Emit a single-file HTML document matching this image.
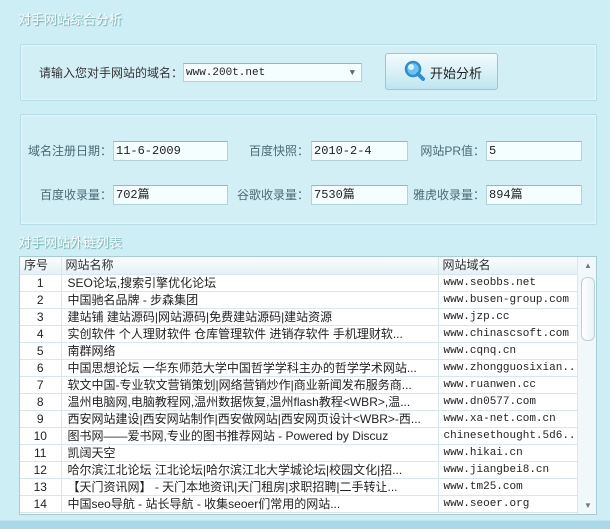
<!DOCTYPE html>
<html><head><meta charset="utf-8"><style>
*{margin:0;padding:0;box-sizing:border-box}
body{width:610px;height:529px;background:#cdeef5;font-family:"Liberation Sans","Noto Sans CJK SC",sans-serif;font-size:12px;color:#222;position:relative;overflow:hidden}
.a{position:absolute;white-space:nowrap}
.title{color:#fff;font-size:13px;text-shadow:1px 1px 1px #6aa;}
.panel{position:absolute;border:1px solid #b6dde6;background:#d3eff6;border-radius:2px;box-shadow:inset 0 0 2px #fff}
.inp{position:absolute;height:20px;background:#f4fdff;border:1px solid #b0d2da;border-top-color:#8fb8c3;font-family:"Liberation Mono","Noto Sans CJK SC",monospace;font-size:12px;line-height:18px;padding-left:2px}
.lbl{position:absolute;font-size:12px;color:#4a6a74;text-align:right;line-height:20px;white-space:nowrap}
table{border-collapse:collapse;font-size:12px}
td{height:17px;border-bottom:1px solid #d6e8ee;border-right:1px solid #d6e8ee;white-space:nowrap;overflow:hidden;line-height:16px}
.dm{font-family:"Liberation Mono",monospace;font-size:11px}
</style></head><body>
<div class="a title" style="left:18px;top:9px">对手网站综合分析</div>
<div class="panel" style="left:20px;top:44px;width:577px;height:57px"></div>
<div class="a" style="left:39px;top:64px;font-size:12px;color:#333">请输入您对手网站的域名：</div>
<div class="inp" style="left:183px;top:63px;width:179px;height:19px;font-size:11px">www.200t.net<span style="position:absolute;right:6px;top:0;color:#666;font-size:9px">▼</span></div>
<div class="a" style="left:385px;top:53px;width:113px;height:37px;border:1px solid #9cc6d2;border-radius:3px;background:linear-gradient(#f2fbfd,#d9f1f7 50%,#bfe5ef);"></div>
<svg class="a" style="left:403px;top:59px" width="24" height="24"><circle cx="10" cy="10" r="7" fill="#6cc3ee" stroke="#2d8fd3" stroke-width="2.5"/><circle cx="8" cy="8" r="3" fill="#d9f2ff"/><line x1="15" y1="15" x2="20" y2="20" stroke="#2d8fd3" stroke-width="4" stroke-linecap="round"/></svg>
<div class="a" style="left:430px;top:63px;font-size:13px">开始分析</div>

<div class="panel" style="left:20px;top:114px;width:577px;height:111px"></div>
<div class="lbl" style="left:10px;top:141px;width:102px">域名注册日期：</div>
<div class="inp" style="left:113px;top:141px;width:115px">11-6-2009</div>
<div class="lbl" style="left:220px;top:141px;width:89px">百度快照：</div>
<div class="inp" style="left:311px;top:141px;width:97px">2010-2-4</div>
<div class="lbl" style="left:410px;top:141px;width:75px">网站PR值：</div>
<div class="inp" style="left:486px;top:141px;width:96px">5</div>
<div class="lbl" style="left:10px;top:185px;width:102px">百度收录量：</div>
<div class="inp" style="left:113px;top:185px;width:115px">702篇</div>
<div class="lbl" style="left:230px;top:185px;width:79px">谷歌收录量：</div>
<div class="inp" style="left:311px;top:185px;width:97px">7530篇</div>
<div class="lbl" style="left:408px;top:185px;width:77px">雅虎收录量：</div>
<div class="inp" style="left:486px;top:185px;width:96px">894篇</div>

<div class="a title" style="left:18px;top:232px">对手网站外链列表</div>
<div class="a" style="left:19px;top:256px;width:578px;height:259px;background:#fff;border:1px solid #a9cbd5;overflow:hidden">
<table style="width:557px;table-layout:fixed">
<colgroup><col style="width:41px"><col style="width:377px"><col style="width:139px"></colgroup>
<tr style="background:linear-gradient(#fafdff,#e4f1f5)"><td style="padding-left:4px;color:#333">序号</td><td style="padding-left:4px;color:#333">网站名称</td><td style="padding-left:4px;color:#333">网站域名</td></tr>
<tr><td style="text-align:center">1</td><td style="padding-left:6px">SEO论坛,搜索引擎优化论坛</td><td class="dm" style="padding-left:5px">www.seobbs.net</td></tr>
<tr><td style="text-align:center">2</td><td style="padding-left:6px">中国驰名品牌 - 步森集团</td><td class="dm" style="padding-left:5px">www.busen-group.com</td></tr>
<tr><td style="text-align:center">3</td><td style="padding-left:6px">建站铺 建站源码|网站源码|免费建站源码|建站资源</td><td class="dm" style="padding-left:5px">www.jzp.cc</td></tr>
<tr><td style="text-align:center">4</td><td style="padding-left:6px">实创软件 个人理财软件 仓库管理软件 进销存软件 手机理财软...</td><td class="dm" style="padding-left:5px">www.chinascsoft.com</td></tr>
<tr><td style="text-align:center">5</td><td style="padding-left:6px">南群网络</td><td class="dm" style="padding-left:5px">www.cqnq.cn</td></tr>
<tr><td style="text-align:center">6</td><td style="padding-left:6px">中国思想论坛 一华东师范大学中国哲学学科主办的哲学学术网站...</td><td class="dm" style="padding-left:5px">www.zhongguosixian...</td></tr>
<tr><td style="text-align:center">7</td><td style="padding-left:6px">软文中国-专业软文营销策划|网络营销炒作|商业新闻发布服务商...</td><td class="dm" style="padding-left:5px">www.ruanwen.cc</td></tr>
<tr><td style="text-align:center">8</td><td style="padding-left:6px">温州电脑网,电脑教程网,温州数据恢复,温州flash教程&lt;WBR&gt;,温...</td><td class="dm" style="padding-left:5px">www.dn0577.com</td></tr>
<tr><td style="text-align:center">9</td><td style="padding-left:6px">西安网站建设|西安网站制作|西安做网站|西安网页设计&lt;WBR&gt;-西...</td><td class="dm" style="padding-left:5px">www.xa-net.com.cn</td></tr>
<tr><td style="text-align:center">10</td><td style="padding-left:6px">图书网——爱书网,专业的图书推荐网站 - Powered by Discuz</td><td class="dm" style="padding-left:5px">chinesethought.5d6...</td></tr>
<tr><td style="text-align:center">11</td><td style="padding-left:6px">凯阔天空</td><td class="dm" style="padding-left:5px">www.hikai.cn</td></tr>
<tr><td style="text-align:center">12</td><td style="padding-left:6px">哈尔滨江北论坛 江北论坛|哈尔滨江北大学城论坛|校园文化|招...</td><td class="dm" style="padding-left:5px">www.jiangbei8.cn</td></tr>
<tr><td style="text-align:center">13</td><td style="padding-left:6px">【天门资讯网】 - 天门本地资讯|天门租房|求职招聘|二手转让...</td><td class="dm" style="padding-left:5px">www.tm25.com</td></tr>
<tr><td style="text-align:center">14</td><td style="padding-left:6px">中国seo导航 - 站长导航 - 收集seoer们常用的网站...</td><td class="dm" style="padding-left:5px">www.seoer.org</td></tr>
</table>
<div style="position:absolute;left:557px;top:0;width:20px;height:258px;background:#f0f8fa;border-left:1px solid #d6e8ee">
<div style="position:absolute;left:6px;top:4px;font-size:8px;color:#777">▲</div>
<div style="position:absolute;left:3px;top:20px;width:14px;height:64px;border:1px solid #b9d3db;border-radius:6px;background:linear-gradient(90deg,#fff,#e8f3f6)"></div>
<div style="position:absolute;left:6px;top:244px;font-size:8px;color:#777">▼</div>
</div>
</div>
<div class="a" style="left:0;top:520px;width:610px;height:9px;background:#a9d9e8;border-top:1px solid #bfe4ef"></div>
</body></html>
